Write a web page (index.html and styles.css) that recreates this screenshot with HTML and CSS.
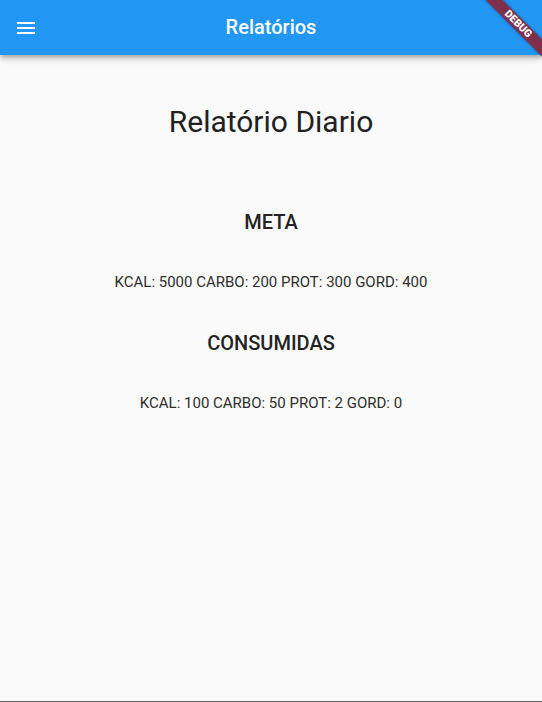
FILE: index.html
```html
<!DOCTYPE html>
<html lang="pt">
<head>
<meta charset="utf-8">
<title>Relatórios</title>
<link rel="stylesheet" href="styles.css">
</head>
<body>
<div class="screen">
  <header class="appbar">
    <button class="menu-btn" aria-label="menu">
      <svg width="24" height="24" viewBox="0 0 24 24"><path fill="#fff" d="M3 18h18v-2H3v2zm0-5h18v-2H3v2zm0-7v2h18V6H3z"/></svg>
    </button>
    <h1 class="appbar-title">Relatórios</h1>
  </header>
  <main class="content">
    <h2 class="page-title">Relatório Diario</h2>
    <h3 class="section-title meta">META</h3>
    <p class="values">KCAL: 5000 CARBO: 200 PROT: 300 GORD: 400</p>
    <h3 class="section-title">CONSUMIDAS</h3>
    <p class="values">KCAL: 100 CARBO: 50 PROT: 2 GORD: 0</p>
  </main>
  <div class="bottom-line"></div>
  <div class="debug-banner">DEBUG</div>
</div>
</body>
</html>
```
FILE: styles.css
```css
* { box-sizing: border-box; }
html, body {
  margin: 0;
  padding: 0;
  background: #fafafa;
  font-family: Roboto, "Noto Sans", sans-serif;
  overflow: hidden;
}
.screen {
  position: relative;
  width: 542px;
  height: 702px;
  display: flex;
  flex-direction: column;
  overflow: hidden;
}
.appbar {
  height: 55px;
  flex: 0 0 55px;
  background: #2196f3;
  display: flex;
  align-items: center;
  position: relative;
  box-shadow: 0 2px 4px -1px rgba(0,0,0,0.2), 0 4px 5px 0 rgba(0,0,0,0.14), 0 1px 10px 0 rgba(0,0,0,0.12);
  z-index: 1;
}
.menu-btn {
  width: 48px;
  height: 48px;
  margin-left: 2px;
  padding: 0;
  border: 0;
  background: transparent;
  display: flex;
  align-items: center;
  justify-content: center;
}
.menu-btn svg { display: block; }
.appbar-title {
  position: absolute;
  left: 0;
  right: 0;
  top: 0;
  margin: 0;
  line-height: 55px;
  text-align: center;
  color: #fff;
  font-size: 20px;
  font-weight: 500;
  pointer-events: none;
}
.content {
  flex: 1;
  display: flex;
  flex-direction: column;
  align-items: center;
  color: #212121;
  padding-top: 49px;
}
.page-title {
  margin: 0;
  font-size: 30px;
  line-height: 36px;
  font-weight: 400;
}
.section-title {
  margin: 41px 0 0;
  font-size: 20px;
  line-height: 24px;
  font-weight: 500;
  color: #232323;
}
.section-title.meta { margin-top: 70px; }
.values {
  margin: 40px 0 0;
  font-size: 15px;
  line-height: 16px;
  color: #2e2e2e;
}
.bottom-line {
  height: 1px;
  flex: 0 0 1px;
  background: #5f5f5f;
}
.debug-banner {
  position: absolute;
  left: 478px;
  top: 18px;
  width: 80px;
  height: 12px;
  background: #7d2f4b;
  color: #fff;
  font-size: 10.5px;
  font-weight: 900;
  line-height: 12px;
  text-align: center;
  transform: rotate(45deg);
  box-shadow: 0 0 3px rgba(0,0,0,0.4);
  z-index: 2;
}
```
